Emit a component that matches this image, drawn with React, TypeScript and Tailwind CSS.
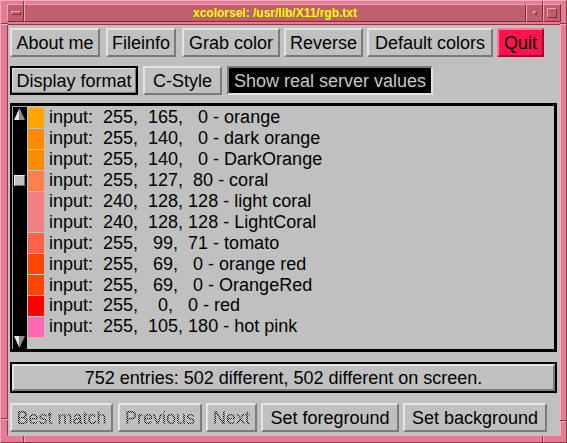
import React from 'react';

// X11 look: grey face, 2px bevels
const raised =
  'border-2 border-t-[#e4e4e4] border-l-[#e4e4e4] border-b-[#7a7a7a] border-r-[#7a7a7a]';
const stipple =
  'bg-[repeating-conic-gradient(#000_0_25%,transparent_0_50%)] bg-[length:2px_2px] bg-clip-text text-transparent';

const Btn: React.FC<{ wClass: string; className?: string; disabled?: boolean; children: React.ReactNode }> = ({
  wClass,
  className = '',
  disabled,
  children,
}) => (
  <div
    className={`${wClass} h-[29px] shrink-0 flex items-center justify-center bg-[#c0c0c0] ${raised} ${className}`}
  >
    <span className={disabled ? stipple : 'text-black'}>{children}</span>
  </div>
);

const entries: [number, number, number, string][] = [
  [255, 165, 0, 'orange'],
  [255, 140, 0, 'dark orange'],
  [255, 140, 0, 'DarkOrange'],
  [255, 127, 80, 'coral'],
  [240, 128, 128, 'light coral'],
  [240, 128, 128, 'LightCoral'],
  [255, 99, 71, 'tomato'],
  [255, 69, 0, 'orange red'],
  [255, 69, 0, 'OrangeRed'],
  [255, 0, 0, 'red'],
  [255, 105, 180, 'hot pink'],
];

const pad = (n: number) => String(n).padStart(3, ' ');

const ArrowUp = () => (
  <svg width="11" height="12" viewBox="0 0 11 12" className="block">
    <polygon points="5.5,0 0,12 5.5,12" fill="#e8e8e8" />
    <polygon points="5.5,0 11,12 5.5,12" fill="#8c8c8c" />
  </svg>
);

const ArrowDown = () => (
  <svg width="11" height="12" viewBox="0 0 11 12" className="block">
    <polygon points="0,0 5.5,0 5.5,12" fill="#e8e8e8" />
    <polygon points="5.5,0 11,0 5.5,12" fill="#8c8c8c" />
  </svg>
);

// little grooves that split the frame into resize handles
const Mark: React.FC<{ className: string }> = ({ className }) => (
  <div className={`absolute ${className}`} />
);

const App: React.FC = () => {
  return (
    <div className="relative w-[567px] h-[443px] bg-[#e47c96] border border-t-[#f8a8bc] border-l-[#f8a8bc] border-b-[#8a3848] border-r-[#8a3848] pt-[3px] pl-[6px] pr-[5px] pb-[6px] flex flex-col font-['Liberation_Sans',Arial,Helvetica,sans-serif]">
      <Mark className="left-[22px] top-0 w-[2px] h-[4px] border-l border-l-[#8a3848] border-r border-r-[#f8a8bc]" />
      <Mark className="right-[22px] top-0 w-[2px] h-[4px] border-l border-l-[#8a3848] border-r border-r-[#f8a8bc]" />
      <Mark className="left-0 top-[22px] w-[7px] h-[2px] border-t border-t-[#8a3848] border-b border-b-[#f8a8bc]" />
      <Mark className="right-0 top-[22px] w-[6px] h-[2px] border-t border-t-[#8a3848] border-b border-b-[#f8a8bc]" />
      <Mark className="left-0 bottom-[22px] w-[7px] h-[2px] border-t border-t-[#8a3848] border-b border-b-[#f8a8bc]" />
      <Mark className="right-0 bottom-[20px] w-[6px] h-[2px] border-t border-t-[#8a3848] border-b border-b-[#f8a8bc]" />
      <Mark className="left-[22px] bottom-0 w-[2px] h-[6px] border-l border-l-[#8a3848] border-r border-r-[#f8a8bc]" />
      <Mark className="right-[22px] bottom-0 w-[2px] h-[6px] border-l border-l-[#8a3848] border-r border-r-[#f8a8bc]" />

      {/* title bar */}
      <div className="h-[18px] flex shrink-0">
        <div className="w-[17px] h-full bg-[#c0606e] border border-t-[#f0a0b2] border-l-[#f0a0b2] border-b-[#7a3040] border-r-[#7a3040] flex items-center justify-center">
          <div className="w-[10px] h-[4px] border border-t-[#f0a0b2] border-l-[#f0a0b2] border-b-[#7a3040] border-r-[#7a3040]" />
        </div>
        <div className="flex-1 h-full bg-[#c0606e] border border-t-[#f0a0b2] border-l-[#f0a0b2] border-b-[#7a3040] border-r-[#7a3040] flex items-center justify-center">
          <span className="text-[12px] leading-none font-bold text-[#ffff00]">
            xcolorsel: /usr/lib/X11/rgb.txt
          </span>
        </div>
        <div className="w-[17px] h-full bg-[#c0606e] border border-t-[#f0a0b2] border-l-[#f0a0b2] border-b-[#7a3040] border-r-[#7a3040] flex items-center justify-center">
          <div className="w-[4px] h-[4px] border border-t-[#f0a0b2] border-l-[#f0a0b2] border-b-[#7a3040] border-r-[#7a3040]" />
        </div>
        <div className="w-[18px] h-full bg-[#c0606e] border border-t-[#f0a0b2] border-l-[#f0a0b2] border-b-[#7a3040] border-r-[#7a3040] flex items-center justify-center">
          <div className="w-[10px] h-[10px] border border-t-[#f0a0b2] border-l-[#f0a0b2] border-b-[#7a3040] border-r-[#7a3040]" />
        </div>
      </div>

      {/* client area */}
      <div className="mt-[2px] flex-1 bg-[#c0c0c0] border border-t-[#8a3848] border-l-[#8a3848] border-b-[#f8a8bc] border-r-[#f8a8bc] pl-[2px] pr-[3px] flex flex-col text-[18px] leading-none">
        <div className="mt-[3px] flex">
          <Btn wClass="w-[90px]">About me</Btn>
          <Btn wClass="w-[70px] ml-[6px]">Fileinfo</Btn>
          <Btn wClass="w-[98px] ml-[6px]">Grab color</Btn>
          <Btn wClass="w-[79px] ml-[4px]">Reverse</Btn>
          <Btn wClass="w-[126px] ml-[4px]">Default colors</Btn>
          <div className="w-[47px] ml-[4px] h-[29px] flex items-center justify-center bg-[#ff1450] border-2 border-t-[#ff7898] border-l-[#ff7898] border-b-[#a00c34] border-r-[#a00c34] text-black">
            Quit
          </div>
        </div>

        <div className="mt-[9px] flex">
          <div className="w-[128px] h-[29px] border-2 border-black">
            <div className="w-full h-full flex items-center justify-center border border-t-[#e4e4e4] border-l-[#e4e4e4] border-b-[#7a7a7a] border-r-[#7a7a7a]">
              Display format
            </div>
          </div>
          <Btn wClass="w-[79px] ml-[5px]">C-Style</Btn>
          <div className="w-[206px] ml-[5px] h-[29px] flex items-center justify-center bg-black text-[#c8c8c8] border-2 border-t-[#7a7a7a] border-l-[#7a7a7a] border-b-[#e4e4e4] border-r-[#e4e4e4]">
            Show real server values
          </div>
        </div>

        {/* colour list */}
        <div className="mt-[8px] h-[249px] border-[3px] border-l-2 border-black flex">
          <div className="w-[15px] h-full bg-black border-l border-t border-[#a8a8a8] flex flex-col items-start pl-[1px] pt-[1px]">
            <ArrowUp />
            <div className="mt-[55px] w-[11px] h-[11px] bg-[#c0c0c0] border border-t-[#f0f0f0] border-l-[#f0f0f0] border-b-[#707070] border-r-[#707070]" />
            <div className="flex-1" />
            <div className="mb-[1px]">
              <ArrowDown />
            </div>
          </div>
          <div className="ml-[1px] pt-[1px] flex flex-col text-[18px]">
            {entries.map(([r, g, b, name], i) => (
              <div key={i} className="h-[20.9px] flex items-center">
                <div
                  className="w-[16px] h-[20px] mt-[1px] shrink-0"
                  style={{ background: `rgb(${r},${g},${b})` }}
                />
                <span className="ml-[5px] whitespace-pre text-black">
                  {`input:  ${pad(r)},  ${pad(g)}, ${pad(b)} - ${name}`}
                </span>
              </div>
            ))}
          </div>
        </div>

        {/* status line */}
        <div className="mt-[10px] h-[31px] border-2 border-black">
          <div className={`w-full h-full flex items-center justify-center bg-[#c0c0c0] ${raised}`}>
            752 entries: 502 different, 502 different on screen.
          </div>
        </div>

        <div className="mt-[10px] flex">
          <Btn wClass="w-[103px]" disabled>Best match</Btn>
          <Btn wClass="w-[84px] ml-[5px]" disabled>Previous</Btn>
          <Btn wClass="w-[51px] ml-[4px]" disabled>Next</Btn>
          <Btn wClass="w-[138px] ml-[4px]">Set foreground</Btn>
          <Btn wClass="w-[144px] ml-[4px]">Set background</Btn>
        </div>
      </div>
    </div>
  );
};

export default App;
